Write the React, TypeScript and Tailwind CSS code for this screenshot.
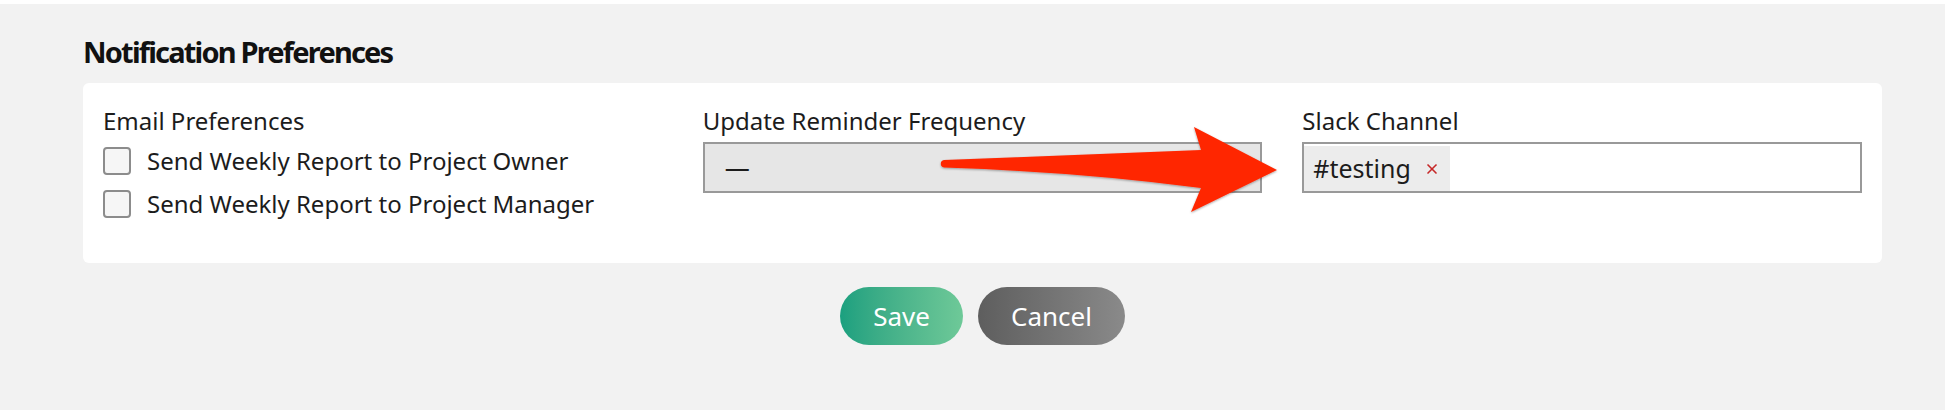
import { X } from "lucide-react";

const font = { fontFamily: '"Noto Sans", "Open Sans", sans-serif' };

function Checkbox({ label }: { label: string }) {
  return (
    <label className="flex h-[43px] items-center gap-[16px]">
      <span className="h-[28px] w-[28px] shrink-0 rounded-[4px] border-2 border-[#8c8c8c] bg-[#f6f6f6]" />
      <span className="text-[24px] leading-[32px] text-[#1c1c1c]">{label}</span>
    </label>
  );
}

function Arrow() {
  return (
    <svg
      className="pointer-events-none absolute left-0 top-0"
      width="1948"
      height="414"
      viewBox="0 0 1948 414"
    >
      <defs>
        <filter id="arrowShadow" x="-5%" y="-20%" width="110%" height="140%">
          <feDropShadow dx="0" dy="1" stdDeviation="1.2" floodColor="#000" floodOpacity="0.35" />
        </filter>
      </defs>
      <path
        d="M 944 160 L 1201 150 L 1194 127 L 1277 170 L 1191 212 L 1201 188 Q 1080 172 944 167.5 A 3.8 3.8 0 0 1 944 160 Z"
        fill="#ff2600"
        filter="url(#arrowShadow)"
      />
    </svg>
  );
}

export default function App() {
  return (
    <div className="relative h-[414px] w-[1948px] bg-white pr-[3px] pt-[4px]" style={font}>
      <div className="h-[406px] bg-[#f2f2f2] pl-[83px] pr-[63px] pt-[30px]">
        <h2 className="h-[36px] text-[29px] font-bold leading-[36px] tracking-[-1.8px] text-[#111]">
          Notification Preferences
        </h2>

        <div className="mt-[13px] grid h-[180px] grid-cols-3 gap-x-[40px] rounded-[6px] bg-white px-[20px] pt-[22px]">
          <div>
            <div className="text-[24px] leading-[32px] text-[#1c1c1c]">Email Preferences</div>
            <div className="mt-[2px]">
              <Checkbox label="Send Weekly Report to Project Owner" />
              <Checkbox label="Send Weekly Report to Project Manager" />
            </div>
          </div>

          <div>
            <div className="text-[24px] leading-[32px] text-[#1c1c1c]">Update Reminder Frequency</div>
            <div className="mt-[5px] flex h-[51px] items-center border-2 border-[#999] bg-[#e6e6e6] pl-[20px] text-[25px] text-[#1c1c1c]">
              —
            </div>
          </div>

          <div>
            <div className="text-[24px] leading-[32px] text-[#1c1c1c]">Slack Channel</div>
            <div className="mt-[5px] flex h-[51px] items-stretch border-2 border-[#999] bg-white pt-[2px]">
              <span className="flex items-center gap-[13px] bg-[#ececec] pl-[9px] pr-[10px] text-[25px] text-[#1c1c1c]">
                #testing
                <X className="h-[16px] w-[16px] text-[#c62828]" strokeWidth={2.5} />
              </span>
            </div>
          </div>
        </div>

        <div className="mt-[24px] flex justify-center gap-[15px]">
          <button
            type="button"
            className="h-[58px] w-[123px] rounded-full bg-gradient-to-r from-[#1aa07f] to-[#6ec998] text-[26px] text-white"
          >
            Save
          </button>
          <button
            type="button"
            className="h-[58px] w-[147px] rounded-full bg-gradient-to-r from-[#5e5e5e] to-[#8a8a8a] text-[26px] text-white"
          >
            Cancel
          </button>
        </div>
      </div>
      <Arrow />
    </div>
  );
}
